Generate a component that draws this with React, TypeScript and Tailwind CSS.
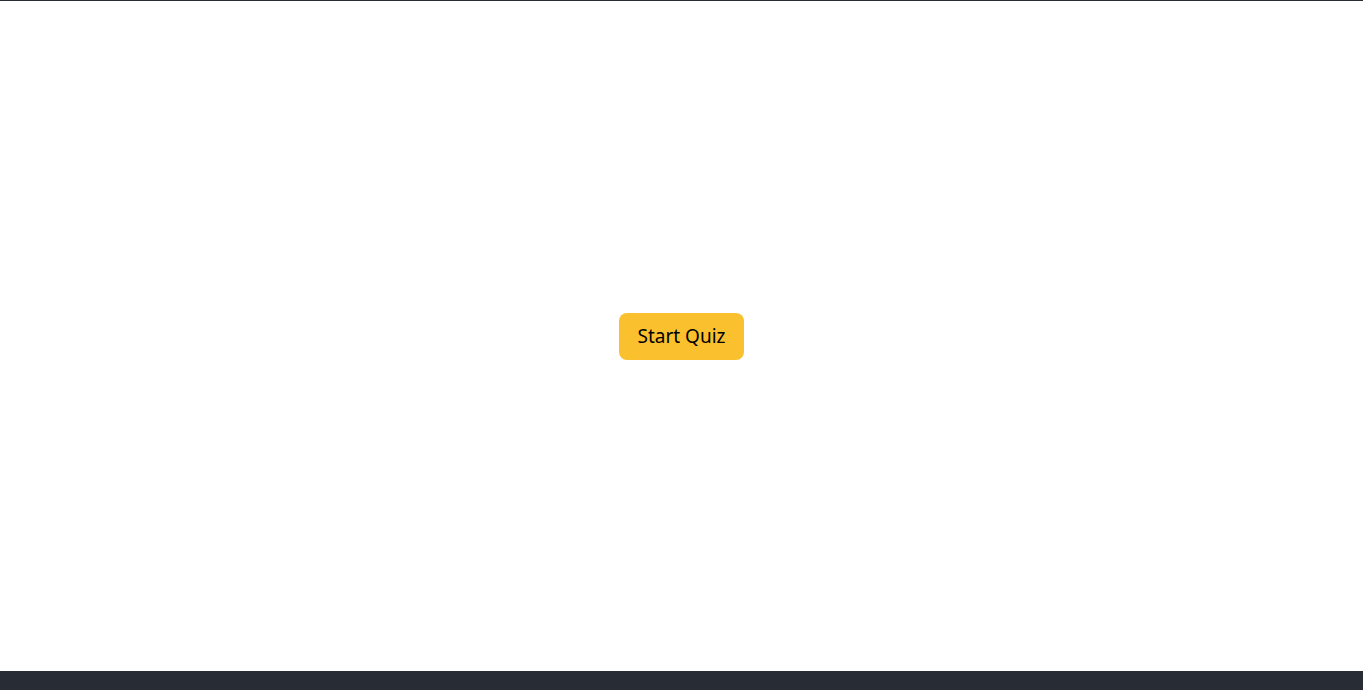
export default function App() {
  return (
    <div className="flex h-[690px] w-full flex-col bg-white font-['Noto_Sans',sans-serif]">
      <div className="h-px w-full bg-[#282c34]" />
      <main className="flex flex-1 items-center justify-center">
        <button className="flex h-[47px] w-[125px] items-center justify-center rounded-lg bg-[#fbc02d] text-[19px] text-black">
          Start Quiz
        </button>
      </main>
      <footer className="h-[19px] w-full bg-[#282c34]" />
    </div>
  );
}
